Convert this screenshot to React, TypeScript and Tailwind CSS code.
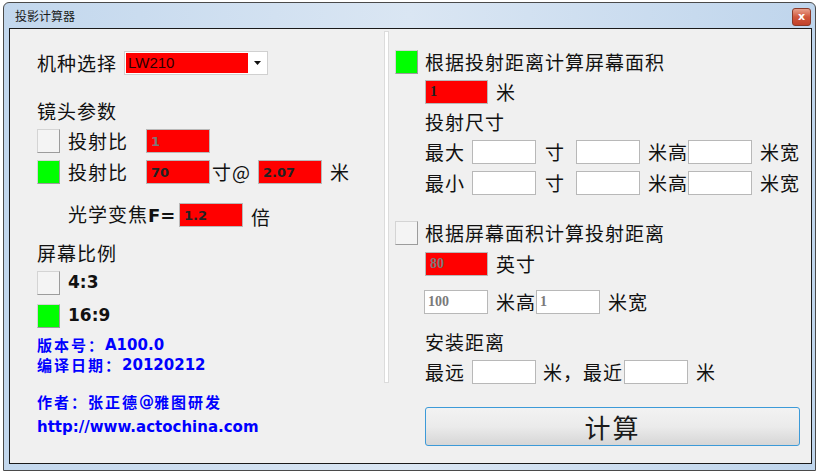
import React from "react";

const cjk = "font-['Noto_Sans_CJK_SC',sans-serif]";
const lbl = `${cjk} text-[19px] tracking-[1px] leading-[24px] text-[#111]`;
const num = "font-['DejaVu_Sans',sans-serif] font-bold";
const blueCjk = `${cjk} text-[15px] tracking-[2px] leading-[18px]`;
const blueNum = `${num} text-[15px] leading-[18px]`;

function Check({ on }: { on?: boolean }) {
  return (
    <div
      className={`w-[23px] h-[24px] shrink-0 border border-[#d4d4d4] border-r-[#9c9c9c] border-b-[#9c9c9c] ${
        on ? "bg-[#00ff00]" : "bg-[#f4f4f4]"
      }`}
    />
  );
}

function Field({ value, red, gray, serif, w = "w-[64px]" }: { value?: string; red?: boolean; gray?: boolean; serif?: boolean; w?: string }) {
  return (
    <div
      className={`${w} h-[24px] shrink-0 border border-[#b8b8b8] flex items-center ${red ? "bg-[#ff0000] p-[1px]" : "bg-white"}`}
    >
      <span
        className={`pl-[3px] leading-none ${
          serif ? "font-['Liberation_Serif',serif] font-bold text-[14px]" : `${num} text-[13px]`
        } ${gray ? "text-[#7a7a7a]" : "text-[#222]"}`}
      >
        {value}
      </span>
    </div>
  );
}

export default function App() {
  return (
    <div className="w-[820px] h-[473px] bg-white pt-[2px] pl-[3px] overflow-hidden">
      <div className="w-[813px] h-[469px] border border-[#4a4a4a] rounded-t-[6px] bg-gradient-to-r from-[#c2d7ed] via-[#dae6f3] to-[#bfd5ec] flex flex-col pl-[5px] pr-[3px] pb-[6px]">
        {/* title bar */}
        <div className="h-[25px] flex items-center justify-between pl-[6px] pr-[1px]">
          <span className={`${cjk} text-[12px] text-[#1a1a1a]`}>投影计算器</span>
          <div className="w-[19px] h-[18px] mt-[2px] rounded-[3px] border border-[#8a3a2a] bg-gradient-to-b from-[#e8a08c] via-[#d0573c] to-[#c2412a] flex items-center justify-center">
            <span className="font-['DejaVu_Sans',sans-serif] font-bold text-[11px] leading-none text-white">x</span>
          </div>
        </div>

        {/* content */}
        <div className="flex-1 border border-[#1a1a1a] bg-[#f0f0f0] flex">
          {/* left column */}
          <div className="w-[374px] shrink-0 pl-[27px] flex flex-col">
            <div className="mt-[22px] flex items-center h-[24px]">
              <span className={`${lbl} w-[87px]`}>机种选择</span>
              <div className="w-[144px] h-[24px] bg-white border border-[#d0d0d0] flex items-center p-[1px]">
                <div className="w-[122px] h-full bg-[#ff0000] flex items-center pl-[2px]">
                  <span className="font-['Liberation_Sans',sans-serif] text-[15px] text-[#2a0000]">LW210</span>
                </div>
                <div className="flex-1 flex justify-center">
                  <svg width="7" height="4" viewBox="0 0 7 4">
                    <path d="M0 0h7L3.5 4z" fill="#111" />
                  </svg>
                </div>
              </div>
            </div>

            <div className={`${lbl} mt-[24px]`}>镜头参数</div>

            <div className="mt-[6px] flex items-center h-[24px]">
              <Check />
              <span className={`${lbl} ml-[8px] w-[78px]`}>投射比</span>
              <Field value="1" red gray />
            </div>

            <div className="mt-[7px] flex items-center h-[24px]">
              <Check on />
              <span className={`${lbl} ml-[8px] w-[78px]`}>投射比</span>
              <Field value="70" red />
              <span className={`${lbl} w-[48px] pl-[2px]`}>寸@</span>
              <Field value="2.07" red />
              <span className={`${lbl} pl-[8px]`}>米</span>
            </div>

            <div className="mt-[19px] flex items-center h-[24px] pl-[31px]">
              <span className={`${lbl} w-[111px]`}>
                光学变焦<span className="font-['DejaVu_Sans',sans-serif] font-bold text-[18px] tracking-normal">F=</span>
              </span>
              <Field value="1.2" red />
              <span className={`${lbl} pl-[8px] mt-[4px]`}>倍</span>
            </div>

            <div className={`${lbl} mt-[14px]`}>屏幕比例</div>

            <div className="mt-[6px] flex items-center h-[24px]">
              <Check />
              <span className={`${num} text-[17px] text-[#111] ml-[8px]`}>4:3</span>
            </div>
            <div className="mt-[9px] flex items-center h-[24px]">
              <Check on />
              <span className={`${num} text-[17px] text-[#111] ml-[8px]`}>16:9</span>
            </div>

            <div className="mt-[7px] text-[#0000ff] font-bold">
              <div className="h-[20px] flex items-center">
                <span className={blueCjk}>版本号：</span>
                <span className={blueNum}>A100.0</span>
              </div>
              <div className="h-[20px] flex items-center">
                <span className={blueCjk}>编译日期：</span>
                <span className={blueNum}>20120212</span>
              </div>
            </div>

            <div className="mt-[17px] h-[20px] flex items-center text-[#0000ff] font-bold">
              <span className={blueCjk}>作者：张正德</span>
              <span className={blueNum}>@</span>
              <span className={blueCjk}>雅图研发</span>
            </div>
            <div className={`mt-[6px] text-[#0000ff] text-[15px] leading-[19px] ${num}`}>http://www.actochina.com</div>
          </div>

          {/* separator */}
          <div className="w-[5px] h-[352px] mt-[2px] shrink-0 bg-white border border-[#dcdcdc]" />

          {/* right column */}
          <div className="flex-1 pl-[6px] flex flex-col">
            <div className="mt-[21px] flex items-center h-[24px]">
              <Check on />
              <span className={`${lbl} ml-[7px]`}>根据投射距离计算屏幕面积</span>
            </div>
            <div className="mt-[6px] flex items-center h-[24px] pl-[30px]">
              <Field value="1" red serif w="w-[63px]" />
              <span className={`${lbl} pl-[8px]`}>米</span>
            </div>
            <div className={`${lbl} mt-[6px] pl-[30px]`}>投射尺寸</div>
            {["最大", "最小"].map((t, i) => (
              <div key={t} className={`${i === 0 ? "mt-[6px]" : "mt-[7px]"} flex items-center h-[24px] pl-[30px]`}>
                <span className={`${lbl} w-[47px]`}>{t}</span>
                <Field />
                <span className={`${lbl} w-[40px] pl-[9px]`}>寸</span>
                <Field />
                <span className={`${lbl} w-[48px] pl-[8px]`}>米高</span>
                <Field />
                <span className={`${lbl} pl-[8px]`}>米宽</span>
              </div>
            ))}

            <div className="mt-[26px] flex items-center h-[24px]">
              <Check />
              <span className={`${lbl} ml-[7px]`}>根据屏幕面积计算投射距离</span>
            </div>
            <div className="mt-[7px] flex items-center h-[24px] pl-[30px]">
              <Field value="80" red gray serif w="w-[63px]" />
              <span className={`${lbl} pl-[8px]`}>英寸</span>
            </div>
            <div className="mt-[14px] flex items-center h-[24px] pl-[29px]">
              <Field value="100" gray serif />
              <span className={`${lbl} w-[48px] pl-[8px]`}>米高</span>
              <Field value="1" gray serif />
              <span className={`${lbl} pl-[8px]`}>米宽</span>
            </div>

            <div className={`${lbl} mt-[16px] pl-[30px]`}>安装距离</div>
            <div className="mt-[6px] flex items-center h-[24px] pl-[30px]">
              <span className={`${lbl} w-[47px]`}>最远</span>
              <Field />
              <span className={`${lbl} w-[88px] pl-[7px]`}>米，最近</span>
              <Field />
              <span className={`${lbl} pl-[8px]`}>米</span>
            </div>

            <div className="mt-[23px] ml-[30px] w-[375px] h-[39px] rounded-[3px] border border-[#3c9ad8] bg-gradient-to-b from-[#f2f2f2] via-[#ebebeb] to-[#d6d6d6] flex items-center justify-center">
              <span className={`${cjk} text-[26px] text-[#1a1a1a] tracking-[2px]`}>计算</span>
            </div>
          </div>
        </div>
      </div>
    </div>
  );
}
